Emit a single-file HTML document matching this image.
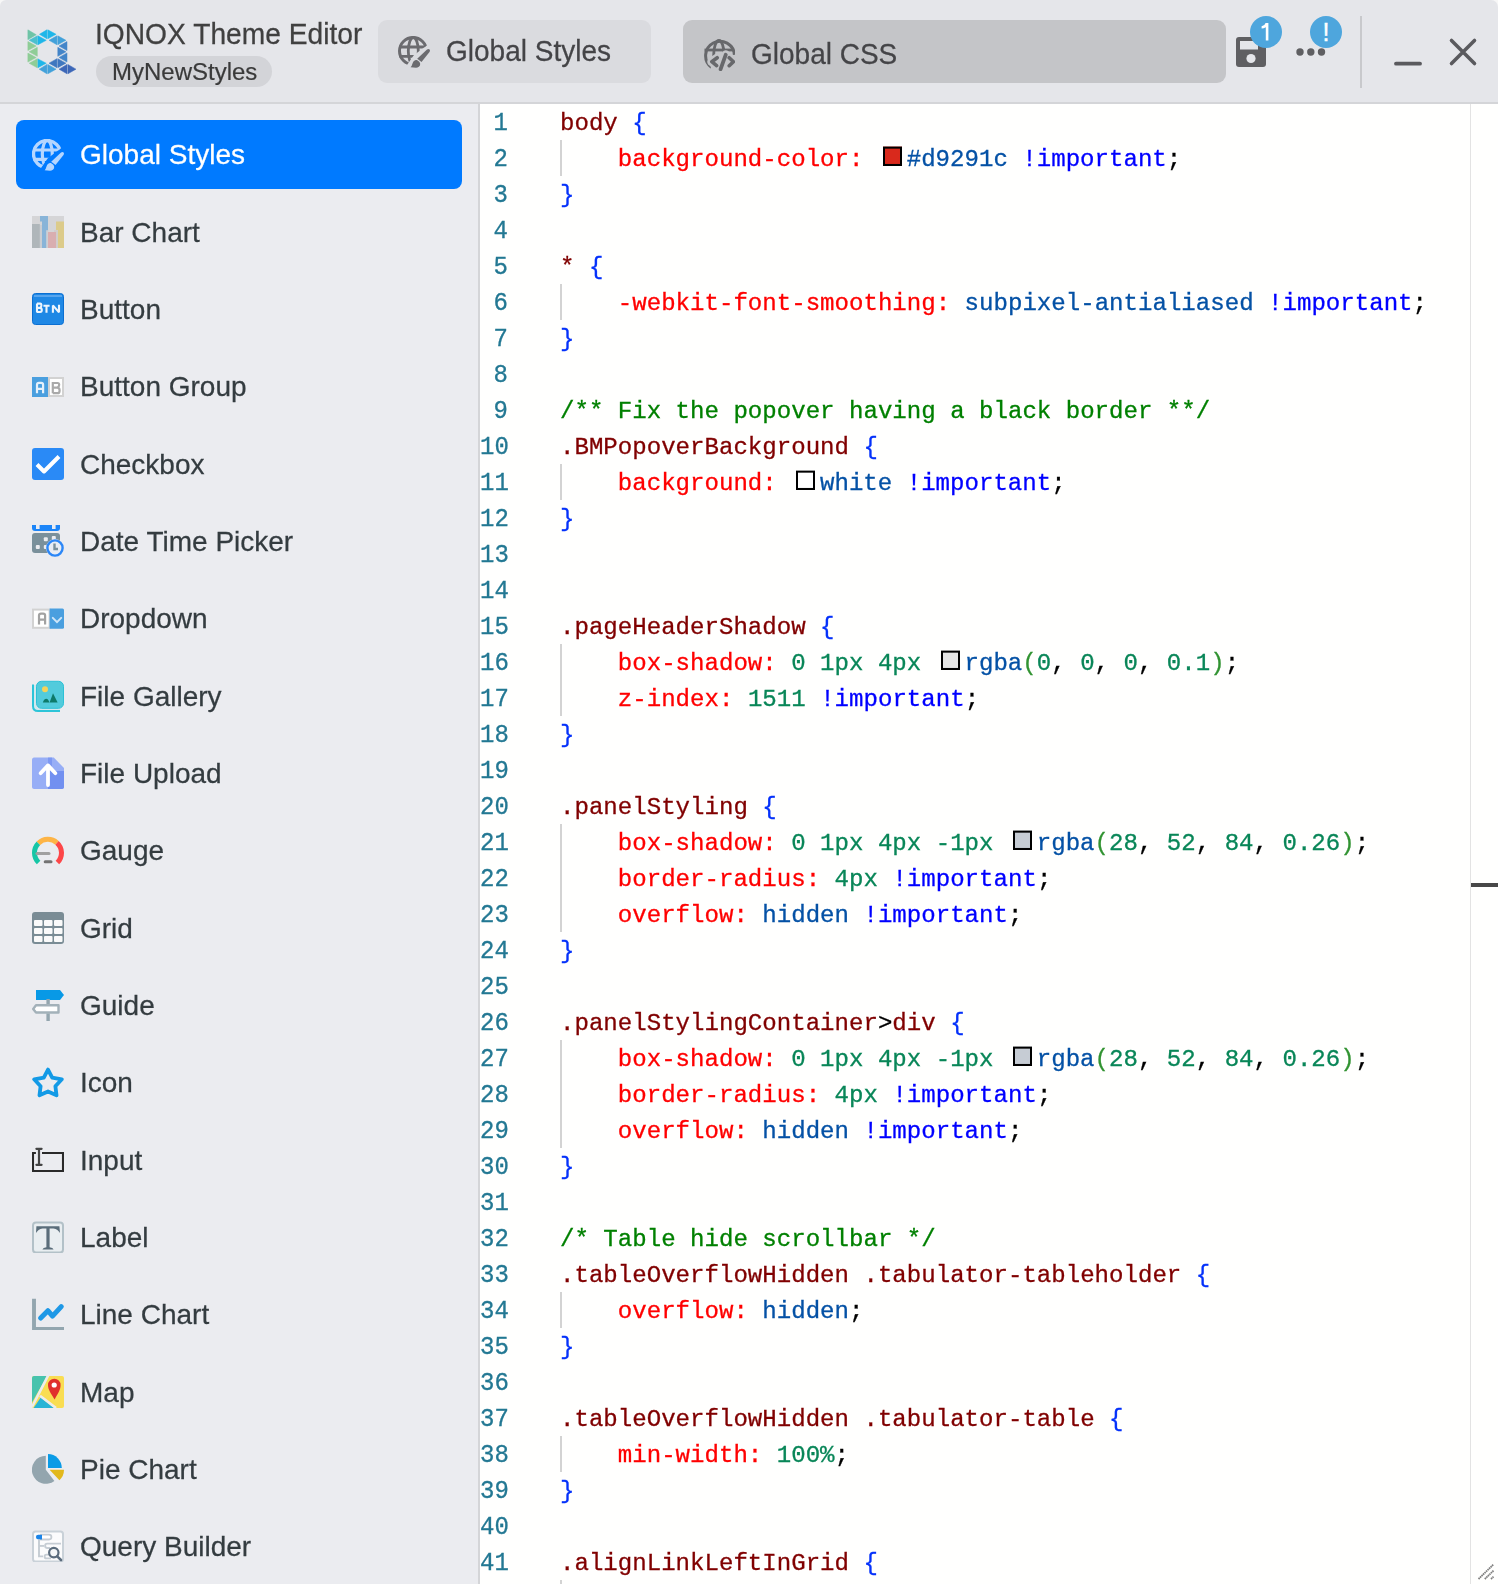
<!DOCTYPE html>
<html><head><meta charset="utf-8"><style>
html,body{margin:0;padding:0;}
body{width:1498px;height:1584px;overflow:hidden;position:relative;background:#f7f7f7;font-family:"Liberation Sans",sans-serif;}
.abs{position:absolute;}
#win{position:absolute;left:0;top:0;width:1498px;height:1584px;background:#e5e6ea;border-radius:6px 7px 0 0;overflow:hidden;}
#hdrb{position:absolute;left:0;top:102px;width:1498px;height:2px;background:#d4d5d8;}
#side{position:absolute;left:0;top:104px;width:478px;height:1480px;background:#ebecf0;}
#sideb{position:absolute;left:478px;top:104px;width:2px;height:1480px;background:#d4d5d8;}
#ed{position:absolute;left:480px;top:104px;width:1018px;height:1480px;background:#fffffe;overflow:hidden;}
.sel{background:#007aff;border-radius:8px;}
.stxt{font-size:28.0px;line-height:50px;color:#343c40;white-space:nowrap;transform:scaleY(1.01);transform-origin:0 35px;-webkit-text-stroke:0.25px currentColor;}
.title{font-size:28.2px;line-height:34px;color:#404040;white-space:nowrap;transform:scaleY(1.04);transform-origin:0 27px;-webkit-text-stroke:0.25px currentColor;}
.pill{background:#d3d4d8;border-radius:16px;}
.pilltxt{font-size:24px;line-height:31px;color:#3a3a3a;white-space:nowrap;transform:scaleY(1.03);transform-origin:0 23px;-webkit-text-stroke:0.2px currentColor;}
.tab{border-radius:9px;}
.tabtxt{font-size:28.0px;line-height:40px;color:#444447;white-space:nowrap;transform:scaleY(1.04);transform-origin:0 30px;-webkit-text-stroke:0.25px currentColor;}
.ln{left:0;width:28px;text-align:right;font-family:"Liberation Mono",monospace;font-size:24px;line-height:36px;height:36px;color:#237893;white-space:pre;padding-top:1.5px;-webkit-text-stroke:0.3px currentColor;transform:scaleY(1.1);transform-origin:0 26px;}
.code{left:80px;font-family:"Liberation Mono",monospace;font-size:24.08px;line-height:36px;height:36px;white-space:pre;color:#000;padding-top:1.5px;-webkit-text-stroke:0.3px currentColor;transform:scaleY(1.02);transform-origin:0 26px;}
.guide{left:80px;width:2px;height:36px;background:#d3d3d3;}
.cbox{display:inline-block;box-sizing:border-box;width:19px;height:19px;border:2.4px solid #000;margin:0 5px 0 4.8px;vertical-align:-0.5px;position:relative;left:0.2px;}
.badge{width:32px;height:32px;border-radius:50%;background:#4ea6dd;color:#fff;text-align:center;font-size:25px;line-height:32px;-webkit-text-stroke:0.4px #fff;}
</style></head><body>
<div id="win">
<svg class="abs" style="left:20px;top:20px" width="64" height="64" viewBox="0 0 1498 1498"><path d="M185 230L380 345.0L185 460Z" fill="#6ec4a7" stroke="#6ec4a7" stroke-width="12" stroke-linejoin="round"/><path d="M405 370L215 475.0L405 580Z" fill="#4bc0cf" stroke="#4bc0cf" stroke-width="12" stroke-linejoin="round"/><path d="M185 505L380 610.0L185 715Z" fill="#8fcd97" stroke="#8fcd97" stroke-width="12" stroke-linejoin="round"/><path d="M405 640L215 745.0L405 850Z" fill="#8fcd97" stroke="#8fcd97" stroke-width="12" stroke-linejoin="round"/><path d="M185 775L380 880.0L185 985Z" fill="#8fcd97" stroke="#8fcd97" stroke-width="12" stroke-linejoin="round"/><path d="M405 905L215 1012.5L405 1120Z" fill="#8fcd97" stroke="#8fcd97" stroke-width="12" stroke-linejoin="round"/><path d="M630 230L455 335.0L630 440Z" fill="#1eb6e9" stroke="#1eb6e9" stroke-width="12" stroke-linejoin="round"/><path d="M420 370L615 475.0L420 580Z" fill="#1eb6e9" stroke="#1eb6e9" stroke-width="12" stroke-linejoin="round"/><path d="M420 910L615 1012.5L420 1115Z" fill="#1eb6e9" stroke="#1eb6e9" stroke-width="12" stroke-linejoin="round"/><path d="M630 1040L450 1150.0L630 1260Z" fill="#42a1da" stroke="#42a1da" stroke-width="12" stroke-linejoin="round"/><path d="M650 230L845 335.0L650 440Z" fill="#1eb6e9" stroke="#1eb6e9" stroke-width="12" stroke-linejoin="round"/><path d="M865 370L680 475.0L865 580Z" fill="#42a1da" stroke="#42a1da" stroke-width="12" stroke-linejoin="round"/><path d="M865 905L680 1010.0L865 1115Z" fill="#3f77bf" stroke="#3f77bf" stroke-width="12" stroke-linejoin="round"/><path d="M650 1040L845 1150.0L650 1260Z" fill="#42a1da" stroke="#42a1da" stroke-width="12" stroke-linejoin="round"/><path d="M885 370L1075 475.0L885 580Z" fill="#42a1da" stroke="#42a1da" stroke-width="12" stroke-linejoin="round"/><path d="M1100 505L915 610.0L1100 715Z" fill="#4385c9" stroke="#4385c9" stroke-width="12" stroke-linejoin="round"/><path d="M885 640L1075 745.0L885 850Z" fill="#4385c9" stroke="#4385c9" stroke-width="12" stroke-linejoin="round"/><path d="M1100 770L915 877.5L1100 985Z" fill="#4385c9" stroke="#4385c9" stroke-width="12" stroke-linejoin="round"/><path d="M885 905L1075 1010.0L885 1115Z" fill="#3f77bf" stroke="#3f77bf" stroke-width="12" stroke-linejoin="round"/><path d="M1100 1040L915 1150.0L1100 1260Z" fill="#3d67b8" stroke="#3d67b8" stroke-width="12" stroke-linejoin="round"/><path d="M1120 1040L1310 1150.0L1120 1260Z" fill="#3d67b8" stroke="#3d67b8" stroke-width="12" stroke-linejoin="round"/></svg>
<div class="title abs" style="left:95px;top:17px">IQNOX Theme Editor</div>
<div class="pill abs" style="left:96px;top:56px;width:176px;height:31px"></div>
<div class="pilltxt abs" style="left:112px;top:56px">MyNewStyles</div>

<div class="tab abs" style="left:378px;top:20px;width:273px;height:63px;background:#dadbdf"></div>
<div class="abs" style="left:398px;top:36px;width:32px;height:32px"><svg width="32" height="32" viewBox="0 0 32 32"><defs><clipPath id="gct"><path d="M-2 -2H34V5.6L15.8 19.2L8.5 29.8L-2 36Z"/></clipPath></defs><g clip-path="url(#gct)" fill="none" stroke="#6b6b6f"><circle cx="15" cy="15" r="13.5" stroke-width="3.0"/><ellipse cx="15.3" cy="15" rx="5" ry="13.5" stroke-width="2.8"/><path d="M1.5 11H28.5M1.5 20.3H28.5" stroke-width="2.8"/></g><path d="M19.2 22.7L29 13.6Q30.6 12.5 31.6 13.6Q32.3 14.6 31.5 16L23.5 25.9Z" fill="#6b6b6f"/><path d="M12.6 31.3C14 30 14 28.5 14.8 26.8C15.5 25 17 24 18 24C19.5 24 22.2 25.8 22.2 28C22.2 30.5 20 31.8 18 31.8Z" fill="#6b6b6f"/></svg></div>
<div class="tabtxt abs" style="left:446px;top:32px">Global Styles</div>

<div class="tab abs" style="left:683px;top:20px;width:543px;height:63px;background:#c4c5c8"></div>
<div class="abs" style="left:703px;top:39px;width:32px;height:32px"><svg width="32" height="32" viewBox="0 0 32 32"><defs><mask id="gmc"><rect x="-2" y="-2" width="36" height="36" fill="#fff"/><g stroke="#000" stroke-width="8.5" stroke-linecap="round" stroke-linejoin="round" fill="#000"><path d="M14.2 18.7L8.5 22.7L13.4 26.7M26.2 18.7L30.7 22.7L26.2 26.7M22.7 15.5L17.4 30.4"/><path d="M12 21H28V28H12Z"/></g></mask></defs><g mask="url(#gmc)" fill="none" stroke="#67686b"><path d="M31.4 15.9A14.4 14.4 0 1 0 8.4 28.2" stroke-width="3"/><ellipse cx="15.9" cy="15.9" rx="5.2" ry="14.4" stroke-width="2.8"/><path d="M1.5 11H30.3" stroke-width="2.8"/></g><path d="M14.2 18.7L8.8 22.7L13.6 26.7M26.2 18.7L30.4 22.7L26.2 26.7" stroke="#67686b" stroke-width="3.6" fill="none" stroke-linecap="round" stroke-linejoin="round"/><path d="M22.7 15.8L17.6 30.2" stroke="#67686b" stroke-width="3.8" stroke-linecap="round"/></svg></div>
<div class="tabtxt abs" style="left:751px;top:34.5px">Global CSS</div>

<svg class="abs" style="left:1236px;top:37px" width="30" height="30" viewBox="0 0 30 30">
<rect x="0" y="0" width="30" height="30" rx="3" fill="#5f5f62"/>
<rect x="4" y="4" width="18" height="8.5" fill="#e5e6ea"/>
<circle cx="15" cy="21.5" r="4.6" fill="#e5e6ea"/>
</svg>
<div class="badge abs" style="left:1250px;top:15.5px"><svg width="32" height="32" viewBox="0 0 32 32" style="position:absolute;left:0;top:0"><path d="M15.6 7H18.4V24.5H15.8V11.2Q13.8 12.4 11.6 12.6V10.3Q14.9 9.6 15.6 7Z" fill="#fff"/></svg></div>
<svg class="abs" style="left:1290px;top:44px" width="40" height="16" viewBox="0 0 40 16">
<circle cx="10" cy="8" r="3.7" fill="#5f5f62"/><circle cx="20.8" cy="8" r="3.7" fill="#5f5f62"/><circle cx="31.5" cy="8" r="3.7" fill="#5f5f62"/>
</svg>
<div class="badge abs" style="left:1310px;top:15.5px">!</div>
<div class="abs" style="left:1360px;top:16px;width:2px;height:72px;background:#c8c9cc"></div>
<svg class="abs" style="left:1390px;top:35px" width="90" height="35" viewBox="0 0 90 35">
<path d="M6 28.7H30" stroke="#5a5a5e" stroke-width="3.8" stroke-linecap="round"/>
<path d="M61.5 5.5L84.5 28.5M84.5 5.5L61.5 28.5" stroke="#5a5a5e" stroke-width="3.6" stroke-linecap="round"/>
</svg>

<div id="hdrb"></div>
<div id="side">
<div style="position:absolute;left:0;top:-104px;width:478px;height:1584px">
<div class="sel abs" style="left:16px;top:120px;width:446px;height:69px"></div><div class="abs" style="left:32px;top:138.50px;width:32px;height:32px"><svg width="32" height="32" viewBox="0 0 32 32"><defs><clipPath id="gcs"><path d="M-2 -2H34V5.6L15.8 19.2L8.5 29.8L-2 36Z"/></clipPath></defs><g clip-path="url(#gcs)" fill="none" stroke="#b5d6ff"><circle cx="15" cy="15" r="13.5" stroke-width="3.4"/><ellipse cx="15.3" cy="15" rx="5" ry="13.5" stroke-width="3.1999999999999997"/><path d="M1.5 11H28.5M1.5 20.3H28.5" stroke-width="3.1999999999999997"/></g><path d="M19.2 22.7L29 13.6Q30.6 12.5 31.6 13.6Q32.3 14.6 31.5 16L23.5 25.9Z" fill="#b5d6ff"/><path d="M12.6 31.3C14 30 14 28.5 14.8 26.8C15.5 25 17 24 18 24C19.5 24 22.2 25.8 22.2 28C22.2 30.5 20 31.8 18 31.8Z" fill="#b5d6ff"/></svg></div><div class="stxt abs" style="left:80px;top:130.00px;color:#fff">Global Styles</div><div class="abs" style="left:32px;top:215.83px;width:32px;height:32px"><svg width="32" height="32" viewBox="0 0 32 32"><rect width="32" height="32" fill="#d5d5d7"/><rect x="7.6" y="9" width="2.6" height="23" fill="#c9cdd2"/><rect x="14" y="14.2" width="2.4" height="17.8" fill="#ccd0d4"/><rect x="22" y="14.2" width="4" height="17.8" fill="#d0cdcc"/><rect x="0" y="8" width="7.8" height="24" fill="#afb6ba"/><path d="M8 0H16V14.2H14.2V32H10V5.5H8Z" fill="#88b4d8"/><rect x="16" y="16" width="8" height="16" fill="#d9aeb0"/><path d="M24 5.6H32V32H26V14H24Z" fill="#dccb8a"/></svg></div><div class="stxt abs" style="left:80px;top:207.58px">Bar Chart</div><div class="abs" style="left:32px;top:293.17px;width:32px;height:32px"><svg width="32" height="32" viewBox="0 0 32 32"><rect x="0.5" y="0.5" width="31" height="31" rx="3" fill="#1f88e5" stroke="#0b6fd2" stroke-width="1"/><rect x="2" y="2" width="28" height="2" fill="#57a5ee"/><path d="M5 10.6H8.2Q9.4 10.6 9.4 12.6Q9.4 14.3 8 14.9H5M8 14.9Q9.8 15.2 9.8 17.1Q9.8 19 8.2 19H5V10.6" stroke="#eef5fd" stroke-width="2.1" fill="none" stroke-linejoin="bevel"/><path d="M11.4 12.8H17.6M14.5 12.8V19.8" stroke="#eef5fd" stroke-width="2.1" fill="none"/><path d="M20.9 19.8V12.4L27 19.2V11.8" stroke="#eef5fd" stroke-width="2.1" fill="none" stroke-linejoin="bevel"/></svg></div><div class="stxt abs" style="left:80px;top:284.92px">Button</div><div class="abs" style="left:32px;top:370.50px;width:32px;height:32px"><svg width="32" height="32" viewBox="0 0 32 32"><rect x="0" y="6" width="16" height="20" fill="#4a9fdf"/><rect x="17" y="7" width="14" height="18" fill="#fff" stroke="#d2d2d2" stroke-width="2"/><path d="M5 22.3V13.8Q5 11.8 7 11.8H9.2Q11.1 11.8 11.1 13.8V22.3M5 17.8H11.1" stroke="#e6f1fb" stroke-width="2.2" fill="none"/><path d="M20.8 22.2V12H25.6Q27.2 12 27.2 13.8Q27.2 15.6 25.4 16.6H20.8M25.4 16.6Q27.6 16.8 27.6 19.4Q27.6 22.2 25.6 22.2H20.8" stroke="#a9a9a9" stroke-width="2.2" fill="none"/></svg></div><div class="stxt abs" style="left:80px;top:362.25px">Button Group</div><div class="abs" style="left:32px;top:447.83px;width:32px;height:32px"><svg width="32" height="32" viewBox="0 0 32 32"><rect x="0" y="0" width="32" height="32" rx="3" fill="#2a8af6"/><path d="M5 16.5L12 23.5L27 8.5" stroke="#fff" stroke-width="4" fill="none" stroke-linejoin="round"/></svg></div><div class="stxt abs" style="left:80px;top:439.58px">Checkbox</div><div class="abs" style="left:32px;top:525.16px;width:32px;height:32px"><svg width="32" height="32" viewBox="0 0 32 32"><path d="M0 0H28V3C28 5 27 6 25 6H3C1 6 0 5 0 3Z" fill="#1c85f8"/><rect x="4" y="0" width="3.6" height="4" fill="#ebecf0"/><rect x="20" y="0" width="3.6" height="4" fill="#ebecf0"/><rect x="0" y="8" width="28" height="20" rx="3" fill="#7a909b"/><rect x="11.8" y="12.2" width="4" height="4" rx="1" fill="#ebecf0"/><rect x="19.8" y="11" width="4" height="4" rx="1" fill="#ebecf0"/><rect x="3.8" y="19.9" width="4" height="4" rx="1" fill="#ebecf0"/><rect x="11.8" y="19.9" width="4" height="4" rx="1" fill="#ebecf0"/><circle cx="23" cy="23" r="9" fill="#ebecf0"/><circle cx="23" cy="23" r="7.6" fill="#e9edf4" stroke="#2c87f7" stroke-width="2.4"/><path d="M22.5 18.5V24H26" stroke="#7a909b" stroke-width="2.4" fill="none"/></svg></div><div class="stxt abs" style="left:80px;top:516.91px">Date Time Picker</div><div class="abs" style="left:32px;top:602.50px;width:32px;height:32px"><svg width="32" height="32" viewBox="0 0 32 32"><rect x="1" y="6.6" width="16.6" height="18.2" fill="#fff" stroke="#d2d2d2" stroke-width="2"/><path d="M17.6 5.6H30.5Q32 5.6 32 7.1V24.3Q32 25.8 30.5 25.8H17.6Z" fill="#4a9fdf"/><path d="M7 21.4V12.6Q7 10.6 9 10.6H11.2Q13.1 10.6 13.1 12.6V21.4M7 16.6H13.1" stroke="#a2a2a2" stroke-width="2.2" fill="none"/><path d="M20.8 14.9L25 19.1L29.2 14.9" stroke="#cfe6f8" stroke-width="2" fill="none" stroke-linecap="round"/></svg></div><div class="stxt abs" style="left:80px;top:594.25px">Dropdown</div><div class="abs" style="left:32px;top:679.83px;width:32px;height:32px"><svg width="32" height="32" viewBox="0 0 32 32"><path d="M1 5V26C1 29 3 31 6 31H28V26H4V5Z" fill="#d3e8ee"/><path d="M1 4.6V26C1 29 3 31 6 31H28" stroke="#2cc4d8" stroke-width="2" fill="none"/><rect x="4.5" y="1.3" width="27" height="27" rx="5" fill="#52cbdc" stroke="#2cc1d6" stroke-width="1"/><circle cx="13" cy="9.3" r="3" fill="#f5d25a"/><path d="M21 13.2L25.6 22.4H17.6Z" fill="#0e7a6a"/><path d="M10.8 22.4C11.8 19.8 13 18.8 14.2 18.8C15.4 18.8 16.5 19.8 17.4 22.4Z" fill="#0e7a6a"/></svg></div><div class="stxt abs" style="left:80px;top:671.58px">File Gallery</div><div class="abs" style="left:32px;top:757.16px;width:32px;height:32px"><svg width="32" height="32" viewBox="0 0 32 32"><path d="M2 0.6H21.8L32 11V30C32 31 31 32 30 32H2C1 32 0 31 0 30V2.6C0 1.6 1 0.6 2 0.6Z" fill="#97aef6"/><path d="M16 14H32V30C32 31 31 32 30 32H16Z" fill="#7290f0"/><path d="M16 0.6H20V14H16Z" fill="#7d98f2"/><path d="M16 28V8.4M8.6 16.2L16 8.4L23.4 16.2" stroke="#fff" stroke-width="3.8" fill="none" stroke-linecap="round" stroke-linejoin="round"/></svg></div><div class="stxt abs" style="left:80px;top:748.91px">File Upload</div><div class="abs" style="left:32px;top:834.50px;width:32px;height:32px"><svg width="32" height="32" viewBox="0 0 32 32"><path d="M6.62 27.5A13.5 13.5 0 0 1 6.45 8.25" stroke="#16c6a6" stroke-width="5" fill="none"/><path d="M6.45 8.25A13.5 13.5 0 0 1 25.0 7.77" stroke="#fdb446" stroke-width="5" fill="none"/><path d="M25.0 7.77A13.5 13.5 0 0 1 25.4 27.5" stroke="#fd4648" stroke-width="5" fill="none"/><path d="M5 18.4H17" stroke="#a0a0a0" stroke-width="3" stroke-linecap="round"/><path d="M13.2 26.8H19" stroke="#737373" stroke-width="3" stroke-linecap="round"/></svg></div><div class="stxt abs" style="left:80px;top:826.25px">Gauge</div><div class="abs" style="left:32px;top:911.83px;width:32px;height:32px"><svg width="32" height="32" viewBox="0 0 32 32"><rect x="0" y="0" width="32" height="32" rx="3" fill="#7a8c95"/><rect x="2" y="8" width="8.5" height="6" rx="1" fill="#fafafa"/><rect x="12" y="8" width="8.5" height="6" rx="1" fill="#fafafa"/><rect x="22" y="8" width="8.5" height="6" rx="1" fill="#fafafa"/><rect x="2" y="16" width="8.5" height="6" rx="1" fill="#fafafa"/><rect x="12" y="16" width="8.5" height="6" rx="1" fill="#fafafa"/><rect x="22" y="16" width="8.5" height="6" rx="1" fill="#fafafa"/><rect x="2" y="24" width="8.5" height="6" rx="1" fill="#fafafa"/><rect x="12" y="24" width="8.5" height="6" rx="1" fill="#fafafa"/><rect x="22" y="24" width="8.5" height="6" rx="1" fill="#fafafa"/></svg></div><div class="stxt abs" style="left:80px;top:903.58px">Grid</div><div class="abs" style="left:32px;top:989.16px;width:32px;height:32px"><svg width="32" height="32" viewBox="0 0 32 32"><path d="M4 1H28L32 6L28 11H4Z" fill="#0899e6"/><rect x="14.4" y="10" width="3.4" height="6" fill="#93a5ae"/><path d="M4 16.3H26.5V23.5H4L1.2 19.9Z" fill="#fff" stroke="#a3b1b9" stroke-width="2.4" stroke-linejoin="round"/><rect x="14.4" y="24.5" width="3.4" height="8" fill="#93a5ae"/></svg></div><div class="stxt abs" style="left:80px;top:980.91px">Guide</div><div class="abs" style="left:32px;top:1066.50px;width:32px;height:32px"><svg width="32" height="32" viewBox="0 0 32 32"><path d="M16 2.6L20.2 10.6L29.8 12.3L23.4 19.3L24.5 28.3L16 24.4L7.5 28.3L8.6 19.3L2.2 12.3L11.8 10.6Z" stroke="#139ae6" stroke-width="3.8" fill="none" stroke-linejoin="round"/></svg></div><div class="stxt abs" style="left:80px;top:1058.25px">Icon</div><div class="abs" style="left:32px;top:1143.83px;width:32px;height:32px"><svg width="32" height="32" viewBox="0 0 32 32"><path d="M3.9 9H1V27H31V9H10" stroke="#2a2a2a" stroke-width="2.1" fill="none"/><path d="M7 5V20.8M4.4 4.8H9.6M4.4 20.8H9.6" stroke="#444" stroke-width="2.2" stroke-linecap="round" fill="none"/></svg></div><div class="stxt abs" style="left:80px;top:1135.58px">Input</div><div class="abs" style="left:32px;top:1221.16px;width:32px;height:32px"><svg width="32" height="32" viewBox="0 0 32 32"><rect x="1" y="1.5" width="30" height="30" rx="3" fill="#e9eef1" stroke="#b3c1c8" stroke-width="2"/><path d="M4.4 5.2H27.4L28 12Q26 8.2 21.5 7.4H17.6V26.3Q21 26.6 21.6 28.4H10.4Q11 26.6 14.4 26.3V7.4H10.5Q6 8.2 4 12Z" fill="#5a6d7a"/></svg></div><div class="stxt abs" style="left:80px;top:1212.91px">Label</div><div class="abs" style="left:32px;top:1298.49px;width:32px;height:32px"><svg width="32" height="32" viewBox="0 0 32 32"><path d="M2 0.8V31H32" stroke="#93a6af" stroke-width="3.9" fill="none"/><path d="M8.7 20L15.9 12.7L20.5 18.1L29.2 8.6" stroke="#1e98e6" stroke-width="5" fill="none" stroke-linecap="round" stroke-linejoin="round"/></svg></div><div class="stxt abs" style="left:80px;top:1290.24px">Line Chart</div><div class="abs" style="left:32px;top:1375.83px;width:32px;height:32px"><svg width="32" height="32" viewBox="0 0 32 32"><defs><clipPath id="mapc"><rect x="0" y="0" width="32" height="32" rx="2"/></clipPath></defs><g clip-path="url(#mapc)"><rect x="0" y="0" width="32" height="32" fill="#f9dd52"/><path d="M0 0H15.1L0 26.4Z" fill="#47c3ad"/><path d="M8.7 21.6L1.6 32H22Z" fill="#28b4d6"/><path d="M16.4 -1L0 31M8 19.7L24 32" stroke="#ececec" stroke-width="2.6" fill="none"/></g><path d="M22.6 23.6C19 17 16 14 16 9A6.3 6.3 0 0 1 28.6 9C28.6 14 26 17 22.6 23.6Z" fill="#e0302c"/><circle cx="22.2" cy="9" r="2.6" fill="#fff"/></svg></div><div class="stxt abs" style="left:80px;top:1367.58px">Map</div><div class="abs" style="left:32px;top:1453.16px;width:32px;height:32px"><svg width="32" height="32" viewBox="0 0 32 32"><path d="M13.8 16.8V2.8A14 14 0 1 0 22.4 27.9Z" fill="#93a5ae"/><path d="M16 14.9V1.1A13.8 13.8 0 0 1 29.8 14.9Z" fill="#0a9be6"/><path d="M17.6 16.8H32A14.4 14.4 0 0 1 27.4 27.3Z" fill="#e2b81c"/></svg></div><div class="stxt abs" style="left:80px;top:1444.91px">Pie Chart</div><div class="abs" style="left:32px;top:1530.49px;width:32px;height:32px"><svg width="32" height="32" viewBox="0 0 32 32"><rect x="1" y="1.6" width="30" height="30" rx="2.5" fill="#fbfbfc" stroke="#c9d1d8" stroke-width="2"/><path d="M9 4.7H17A2.4 2.4 0 0 1 17 9.5H9Z" fill="#fff" stroke="#c5ccd3" stroke-width="1.8"/><path d="M6.3 4.7H10V9.5H6.3A2.4 2.4 0 0 1 6.3 4.7Z" fill="#1a84e8"/><path d="M7 9.5V26.4H11" stroke="#c5ccd3" stroke-width="1.9" fill="none"/><path d="M7 15.9H12" stroke="#c5ccd3" stroke-width="1.9" fill="none"/><path d="M29 13.6H15.3A2.2 2.2 0 0 0 15.3 18H18" stroke="#c5ccd3" stroke-width="1.9" fill="none"/><path d="M19 24.6H14.5A1.9 1.9 0 0 0 14.5 28.4H19" stroke="#c5ccd3" stroke-width="1.9" fill="none"/><circle cx="21.8" cy="22.6" r="4.7" fill="#f4f6f8" stroke="#5a6b7c" stroke-width="2.2"/><path d="M25.2 26.4L29 30" stroke="#5a6b7c" stroke-width="2.6" stroke-linecap="round"/></svg></div><div class="stxt abs" style="left:80px;top:1522.24px">Query Builder</div>
</div>
</div>
<div id="sideb"></div>
<div id="ed">
<div style="position:absolute;left:-480px;top:-104px;width:1498px;height:1584px">
<div style="position:absolute;left:480px;top:0;width:1018px;height:1584px">
<div class="ln abs" style="top:104px">1</div><div class="code abs" style="top:104px"><span style="color:#800000">body</span> <span style="color:#0431fa">{</span></div><div class="ln abs" style="top:140px">2</div><div class="guide abs" style="top:140px"></div><div class="code abs" style="top:140px">    <span style="color:#ff0000">background-color:</span> <span class="cbox" style="background:#d9291c"></span><span style="color:#0451a5">#d9291c</span> <span style="color:#0000ff">!important</span><span style="color:#000000">;</span></div><div class="ln abs" style="top:176px">3</div><div class="code abs" style="top:176px"><span style="color:#0431fa">}</span></div><div class="ln abs" style="top:212px">4</div><div class="code abs" style="top:212px"></div><div class="ln abs" style="top:248px">5</div><div class="code abs" style="top:248px"><span style="color:#800000">*</span> <span style="color:#0431fa">{</span></div><div class="ln abs" style="top:284px">6</div><div class="guide abs" style="top:284px"></div><div class="code abs" style="top:284px">    <span style="color:#ff0000">-webkit-font-smoothing:</span> <span style="color:#0451a5">subpixel-antialiased</span> <span style="color:#0000ff">!important</span><span style="color:#000000">;</span></div><div class="ln abs" style="top:320px">7</div><div class="code abs" style="top:320px"><span style="color:#0431fa">}</span></div><div class="ln abs" style="top:356px">8</div><div class="code abs" style="top:356px"></div><div class="ln abs" style="top:392px">9</div><div class="code abs" style="top:392px"><span style="color:#008000">/** Fix the popover having a black border **/</span></div><div class="ln abs" style="top:428px">10</div><div class="code abs" style="top:428px"><span style="color:#800000">.BMPopoverBackground</span> <span style="color:#0431fa">{</span></div><div class="ln abs" style="top:464px">11</div><div class="guide abs" style="top:464px"></div><div class="code abs" style="top:464px">    <span style="color:#ff0000">background:</span> <span class="cbox" style="background:#ffffff"></span><span style="color:#0451a5">white</span> <span style="color:#0000ff">!important</span><span style="color:#000000">;</span></div><div class="ln abs" style="top:500px">12</div><div class="code abs" style="top:500px"><span style="color:#0431fa">}</span></div><div class="ln abs" style="top:536px">13</div><div class="code abs" style="top:536px"></div><div class="ln abs" style="top:572px">14</div><div class="code abs" style="top:572px"></div><div class="ln abs" style="top:608px">15</div><div class="code abs" style="top:608px"><span style="color:#800000">.pageHeaderShadow</span> <span style="color:#0431fa">{</span></div><div class="ln abs" style="top:644px">16</div><div class="guide abs" style="top:644px"></div><div class="code abs" style="top:644px">    <span style="color:#ff0000">box-shadow:</span> <span style="color:#098658">0 1px 4px</span> <span class="cbox" style="background:#e5e5e5"></span><span style="color:#0451a5">rgba</span><span style="color:#319331">(</span><span style="color:#098658">0</span><span style="color:#000000">, </span><span style="color:#098658">0</span><span style="color:#000000">, </span><span style="color:#098658">0</span><span style="color:#000000">, </span><span style="color:#098658">0.1</span><span style="color:#319331">)</span><span style="color:#000000">;</span></div><div class="ln abs" style="top:680px">17</div><div class="guide abs" style="top:680px"></div><div class="code abs" style="top:680px">    <span style="color:#ff0000">z-index:</span> <span style="color:#098658">1511</span> <span style="color:#0000ff">!important</span><span style="color:#000000">;</span></div><div class="ln abs" style="top:716px">18</div><div class="code abs" style="top:716px"><span style="color:#0431fa">}</span></div><div class="ln abs" style="top:752px">19</div><div class="code abs" style="top:752px"></div><div class="ln abs" style="top:788px">20</div><div class="code abs" style="top:788px"><span style="color:#800000">.panelStyling</span> <span style="color:#0431fa">{</span></div><div class="ln abs" style="top:824px">21</div><div class="guide abs" style="top:824px"></div><div class="code abs" style="top:824px">    <span style="color:#ff0000">box-shadow:</span> <span style="color:#098658">0 1px 4px -1px</span> <span class="cbox" style="background:#c6ccd4"></span><span style="color:#0451a5">rgba</span><span style="color:#319331">(</span><span style="color:#098658">28</span><span style="color:#000000">, </span><span style="color:#098658">52</span><span style="color:#000000">, </span><span style="color:#098658">84</span><span style="color:#000000">, </span><span style="color:#098658">0.26</span><span style="color:#319331">)</span><span style="color:#000000">;</span></div><div class="ln abs" style="top:860px">22</div><div class="guide abs" style="top:860px"></div><div class="code abs" style="top:860px">    <span style="color:#ff0000">border-radius:</span> <span style="color:#098658">4px</span> <span style="color:#0000ff">!important</span><span style="color:#000000">;</span></div><div class="ln abs" style="top:896px">23</div><div class="guide abs" style="top:896px"></div><div class="code abs" style="top:896px">    <span style="color:#ff0000">overflow:</span> <span style="color:#0451a5">hidden</span> <span style="color:#0000ff">!important</span><span style="color:#000000">;</span></div><div class="ln abs" style="top:932px">24</div><div class="code abs" style="top:932px"><span style="color:#0431fa">}</span></div><div class="ln abs" style="top:968px">25</div><div class="code abs" style="top:968px"></div><div class="ln abs" style="top:1004px">26</div><div class="code abs" style="top:1004px"><span style="color:#800000">.panelStylingContainer</span><span style="color:#000000">&gt;</span><span style="color:#800000">div</span> <span style="color:#0431fa">{</span></div><div class="ln abs" style="top:1040px">27</div><div class="guide abs" style="top:1040px"></div><div class="code abs" style="top:1040px">    <span style="color:#ff0000">box-shadow:</span> <span style="color:#098658">0 1px 4px -1px</span> <span class="cbox" style="background:#c6ccd4"></span><span style="color:#0451a5">rgba</span><span style="color:#319331">(</span><span style="color:#098658">28</span><span style="color:#000000">, </span><span style="color:#098658">52</span><span style="color:#000000">, </span><span style="color:#098658">84</span><span style="color:#000000">, </span><span style="color:#098658">0.26</span><span style="color:#319331">)</span><span style="color:#000000">;</span></div><div class="ln abs" style="top:1076px">28</div><div class="guide abs" style="top:1076px"></div><div class="code abs" style="top:1076px">    <span style="color:#ff0000">border-radius:</span> <span style="color:#098658">4px</span> <span style="color:#0000ff">!important</span><span style="color:#000000">;</span></div><div class="ln abs" style="top:1112px">29</div><div class="guide abs" style="top:1112px"></div><div class="code abs" style="top:1112px">    <span style="color:#ff0000">overflow:</span> <span style="color:#0451a5">hidden</span> <span style="color:#0000ff">!important</span><span style="color:#000000">;</span></div><div class="ln abs" style="top:1148px">30</div><div class="code abs" style="top:1148px"><span style="color:#0431fa">}</span></div><div class="ln abs" style="top:1184px">31</div><div class="code abs" style="top:1184px"></div><div class="ln abs" style="top:1220px">32</div><div class="code abs" style="top:1220px"><span style="color:#008000">/* Table hide scrollbar */</span></div><div class="ln abs" style="top:1256px">33</div><div class="code abs" style="top:1256px"><span style="color:#800000">.tableOverflowHidden .tabulator-tableholder</span> <span style="color:#0431fa">{</span></div><div class="ln abs" style="top:1292px">34</div><div class="guide abs" style="top:1292px"></div><div class="code abs" style="top:1292px">    <span style="color:#ff0000">overflow:</span> <span style="color:#0451a5">hidden</span><span style="color:#000000">;</span></div><div class="ln abs" style="top:1328px">35</div><div class="code abs" style="top:1328px"><span style="color:#0431fa">}</span></div><div class="ln abs" style="top:1364px">36</div><div class="code abs" style="top:1364px"></div><div class="ln abs" style="top:1400px">37</div><div class="code abs" style="top:1400px"><span style="color:#800000">.tableOverflowHidden .tabulator-table</span> <span style="color:#0431fa">{</span></div><div class="ln abs" style="top:1436px">38</div><div class="guide abs" style="top:1436px"></div><div class="code abs" style="top:1436px">    <span style="color:#ff0000">min-width:</span> <span style="color:#098658">100%</span><span style="color:#000000">;</span></div><div class="ln abs" style="top:1472px">39</div><div class="code abs" style="top:1472px"><span style="color:#0431fa">}</span></div><div class="ln abs" style="top:1508px">40</div><div class="code abs" style="top:1508px"></div><div class="ln abs" style="top:1544px">41</div><div class="code abs" style="top:1544px"><span style="color:#800000">.alignLinkLeftInGrid</span> <span style="color:#0431fa">{</span></div><div class="ln abs" style="top:1580px"></div><div class="guide abs" style="top:1580px"></div><div class="code abs" style="top:1580px"></div>
</div>
<div class="abs" style="left:1470px;top:104px;width:1px;height:1480px;background:#e3e3e3"></div>
<div class="abs" style="left:1471px;top:883px;width:27px;height:4px;background:#484848"></div>
<svg class="abs" style="left:1476px;top:1560px" width="20" height="20" viewBox="0 0 20 20">
<path d="M2.5 19L17.5 4.4M8.8 19L17.5 10.7M15 19L17.5 16.6" stroke="#808080" stroke-width="1.8" stroke-dasharray="1.6 0.5"/>
</svg>
</div>
</div>
</div>
</body></html>
